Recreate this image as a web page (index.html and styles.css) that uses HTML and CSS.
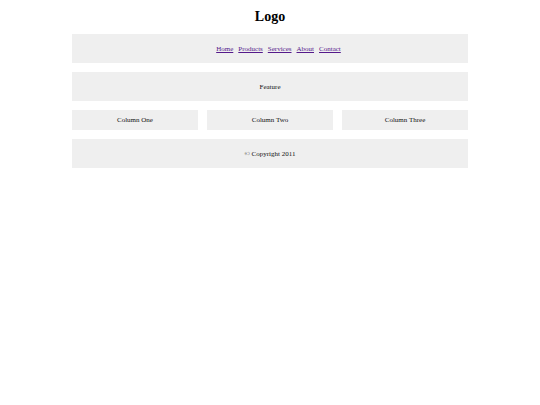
FILE: index.html
```html
<!DOCTYPE html>
<html>
<head>
<meta charset="utf-8">
<link rel="stylesheet" href="styles.css">
</head>
<body>
<div class="page">
  <header class="header"><h1 class="logo">Logo</h1></header>
  <nav class="box nav">
    <a href="#">Home</a>
    <a href="#">Products</a>
    <a href="#">Services</a>
    <a href="#">About</a>
    <a href="#">Contact</a>
  </nav>
  <section class="box feature">Feature</section>
  <div class="columns">
    <div class="col">Column One</div>
    <div class="col">Column Two</div>
    <div class="col">Column Three</div>
  </div>
  <footer class="box footer">&copy; Copyright 2011</footer>
</div>
</body>
</html>
```
FILE: styles.css
```css
html, body {
  margin: 0;
  padding: 0;
  background: #fff;
}
body {
  font-family: "Liberation Serif", "Times New Roman", serif;
  font-size: 7px;
  color: #111;
}
.page {
  width: 396px;
  margin: 0 auto;
  display: flex;
  flex-direction: column;
  gap: 9px;
}
.header {
  height: 25px;
  display: flex;
  align-items: flex-end;
  justify-content: center;
}
.logo {
  margin: 0;
  font-size: 14px;
  font-weight: bold;
  line-height: 16px;
  color: #000;
}
.box {
  background: #efefef;
  height: 29px;
  display: flex;
  align-items: center;
  justify-content: center;
}
.nav {
  gap: 5px;
  padding-left: 17px;
}
.nav a {
  color: #551a8b;
  text-decoration: underline;
}
.columns {
  display: grid;
  grid-template-columns: repeat(3, 1fr);
  gap: 9px;
}
.col {
  background: #efefef;
  height: 20px;
  display: flex;
  align-items: center;
  justify-content: center;
}
```
